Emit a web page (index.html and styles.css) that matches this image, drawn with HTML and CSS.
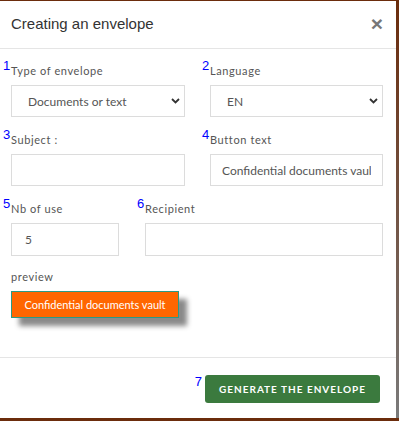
FILE: index.html
```html
<!DOCTYPE html>
<html>
<head>
    <link rel="stylesheet" href="styles.css">
    <title>Creating an envelope</title>
</head>
<body>
    <div class="modal">
        <div class="modal-header">
            <h4 class="modal-title">Creating an envelope</h4>
            <span class="close">&times;</span>
        </div>
        <div class="modal-body">
            <div class="row">
                <div class="field col-type">
                    <label><span class="num">1</span>Type of envelope</label>
                    <div class="select-wrap">
                        <select class="control">
                            <option>Documents or text</option>
                        </select>
                        <svg class="chevron" width="9" height="6" viewBox="0 0 9 6"><path d="M1 1 L4.5 4.5 L8 1" fill="none" stroke="#333" stroke-width="1.8"/></svg>
                    </div>
                </div>
                <div class="field col-lang">
                    <label><span class="num">2</span>Language</label>
                    <div class="select-wrap">
                        <select class="control">
                            <option>EN</option>
                        </select>
                        <svg class="chevron" width="9" height="6" viewBox="0 0 9 6"><path d="M1 1 L4.5 4.5 L8 1" fill="none" stroke="#333" stroke-width="1.8"/></svg>
                    </div>
                </div>
            </div>
            <div class="row">
                <div class="field col-type">
                    <label><span class="num">3</span>Subject :</label>
                    <input class="control" type="text">
                </div>
                <div class="field col-lang">
                    <label><span class="num">4</span>Button text</label>
                    <input class="control" type="text" value="Confidential documents vault">
                </div>
            </div>
            <div class="row">
                <div class="field col-nb">
                    <label><span class="num">5</span>Nb of use</label>
                    <input class="control" type="text" value="5">
                </div>
                <div class="field col-recipient">
                    <label><span class="num">6</span>Recipient</label>
                    <input class="control" type="text">
                </div>
            </div>
            <div class="preview">
                <p class="preview-label">preview</p>
                <button class="preview-button">Confidential documents vault</button>
            </div>
        </div>
        <div class="modal-footer">
            <span class="num num-footer">7</span>
            <button class="generate">Generate the envelope</button>
        </div>
    </div>
</body>
</html>
```

FILE: styles.css
```css
html {
    background: linear-gradient(#6b2c0c, #7a7a7a);
}
body {
    margin: 0;
    padding-top: 1px;
    font-family: Lato, "Liberation Sans", sans-serif;
}
.modal {
    width: 396px;
    height: 417px;
    background: white;
    display: flex;
    flex-direction: column;
}
.modal-header {
    height: 47px;
    border-bottom: 1px solid #e5e5e5;
    display: flex;
    align-items: center;
    justify-content: space-between;
    padding: 0 13px 0 11px;
}
.modal-title {
    margin: 0;
    font-family: "Liberation Sans", Arial, sans-serif;
    font-weight: normal;
    font-size: 15px;
    color: #333;
    padding-bottom: 2px;
}
.close {
    font-family: "Liberation Sans", Arial, sans-serif;
    font-weight: bold;
    font-size: 21px;
    color: #777;
    padding-bottom: 2px;
}
.modal-body {
    flex: 1;
    padding: 8px 13px 0 3px;
}
.row {
    display: flex;
    justify-content: space-between;
    margin-bottom: 9px;
}
.field label {
    display: block;
    font-size: 11px;
    letter-spacing: 0.6px;
    color: #555;
    height: 28px;
    line-height: 28px;
}
.num {
    display: inline-block;
    width: 8px;
    font-family: "Liberation Sans", Arial, sans-serif;
    font-size: 13px;
    letter-spacing: 0;
    color: #0000ff;
    vertical-align: 5px;
    line-height: 10px;
}
.col-type {
    width: 182px;
}
.col-lang {
    width: 181px;
}
.col-nb {
    width: 116px;
}
.col-recipient {
    width: 246px;
}
.control {
    display: block;
    box-sizing: border-box;
    width: calc(100% - 8px);
    margin-left: 8px;
    height: 32px;
    border: 1px solid #dcdcdc;
    background: white;
    font-family: Lato, "Liberation Sans", sans-serif;
    font-size: 12px;
    color: #555;
    padding: 0 11px;
    -webkit-appearance: none;
    appearance: none;
    border-radius: 0;
    outline: none;
}
select.control {
    padding-left: 16px;
}
.col-nb .control,
.col-recipient .control {
    height: 33px;
    padding-left: 13px;
}
.select-wrap {
    position: relative;
}
.chevron {
    position: absolute;
    right: 5px;
    top: 13px;
}
.preview {
    padding-left: 8px;
    margin-top: 14px;
}
.preview-label {
    margin: 0 0 8px 0;
    font-size: 11px;
    letter-spacing: 0.6px;
    color: #555;
}
.preview-button {
    width: 168px;
    height: 27px;
    background: #ff6600;
    border: 1px solid #2a9a86;
    color: white;
    font-family: Lato, "Liberation Sans", sans-serif;
    font-size: 11px;
    box-shadow: 8px 8px 5px #8a8a8a;
    padding: 0;
}
.modal-footer {
    border-top: 1px solid #e5e5e5;
    height: 61px;
    box-sizing: border-box;
    display: flex;
    justify-content: flex-end;
    align-items: flex-start;
    padding: 17px 16px 0 0;
}
.num-footer {
    width: auto;
    margin-right: 3px;
    margin-top: 2px;
    vertical-align: 0;
}
.generate {
    width: 175px;
    height: 28px;
    background: #3b7a3e;
    border: none;
    border-radius: 3px;
    color: white;
    font-family: Lato, "Liberation Sans", sans-serif;
    font-weight: bold;
    font-size: 10px;
    letter-spacing: 1px;
    text-transform: uppercase;
}
```
